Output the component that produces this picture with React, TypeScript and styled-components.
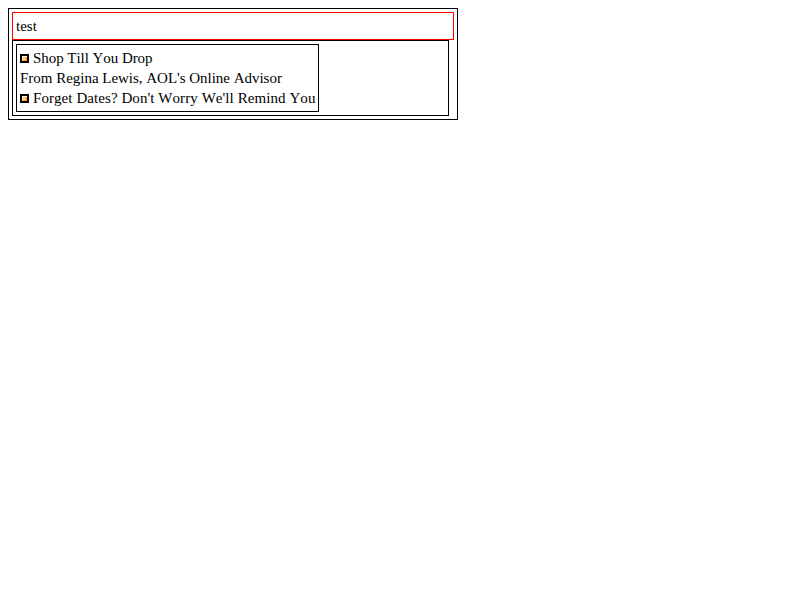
import React from "react";
import styled, { createGlobalStyle } from "styled-components";

const GlobalStyle = createGlobalStyle`
  body {
    margin: 8px;
    background: #fff;
    color: #000;
    font: 15px/20px "Liberation Serif", "Times New Roman", serif;
    font-kerning: none;
  }
`;

const Frame = styled.main`
  box-sizing: border-box;
  width: 450px;
  height: 112px;
  padding: 3px;
  border: 1px solid #000;
`;

const Header = styled.header`
  box-sizing: border-box;
  width: 442px;
  height: 28px;
  padding: 3px;
  border: 1px solid #f00;
`;

const Body = styled.section`
  box-sizing: border-box;
  width: 437px;
  height: 76px;
  padding: 3px;
  border: 1px solid #000;
`;

const List = styled.div`
  box-sizing: border-box;
  width: 303px;
  height: 68px;
  padding: 3px;
  border: 1px solid #000;
`;

const Row = styled.div`
  display: flex;
  align-items: center;
  gap: 4px;
  height: 20px;
  white-space: pre;
`;

const Label = styled.span<{ $spacing: number }>`
  letter-spacing: ${(p) => p.$spacing}px;
`;

const BulletIcon = styled.svg`
  display: block;
  flex: none;
`;

const Bullet = () => (
  <BulletIcon width="9" height="9" viewBox="0 0 9 9" shapeRendering="crispEdges">
    <path fill="#000" d="M0 0h9v9H0z" />
    <path fill="#ff9c21" d="M2 2h5v5H2z" />
    <path fill="#fff0dc" d="M2 2h5v1H3v4H2z" />
    <path fill="#ffc66b" d="M3 3h3v3H3z" />
  </BulletIcon>
);

const items = [
  { text: "Shop Till You Drop", bullet: true, spacing: -0.05 },
  { text: "From Regina Lewis, AOL's Online Advisor", bullet: false, spacing: -0.02 },
  { text: "Forget Dates? Don't Worry We'll Remind You", bullet: true, spacing: 0.07 },
];

export default function App() {
  return (
    <>
      <GlobalStyle />
      <Frame>
        <Header>
          <Label $spacing={0}>test</Label>
        </Header>
        <Body>
          <List>
            {items.map((item) => (
              <Row key={item.text}>
                {item.bullet && <Bullet />}
                <Label $spacing={item.spacing}>{item.text}</Label>
              </Row>
            ))}
          </List>
        </Body>
      </Frame>
    </>
  );
}
